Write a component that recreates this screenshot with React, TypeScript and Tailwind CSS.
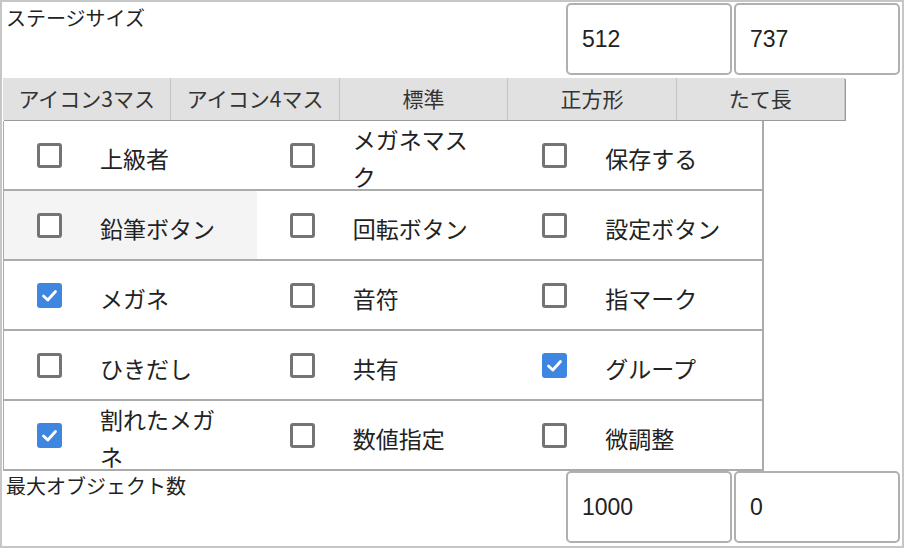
const font = { fontFamily: '"Noto Sans CJK JP", "Noto Sans", sans-serif' };

const presets = ['アイコン3マス', 'アイコン4マス', '標準', '正方形', 'たて長'];

const options: [string, boolean][][] = [
  [['上級者', false], ['メガネマスク', false], ['保存する', false]],
  [['鉛筆ボタン', false], ['回転ボタン', false], ['設定ボタン', false]],
  [['メガネ', true], ['音符', false], ['指マーク', false]],
  [['ひきだし', false], ['共有', false], ['グループ', true]],
  [['割れたメガネ', true], ['数値指定', false], ['微調整', false]],
];

function Box({ checked }: { checked: boolean }) {
  if (checked) {
    return (
      <div className="w-[25px] h-[25px] shrink-0 rounded-[3px] bg-[#3f86e0] flex items-center justify-center">
        <svg width="19" height="19" viewBox="0 0 19 19">
          <path d="M3.5 10 L7.8 14 L15.5 5.5" fill="none" stroke="white" strokeWidth="2.8" strokeLinecap="round" strokeLinejoin="round" />
        </svg>
      </div>
    );
  }
  return <div className="w-[25px] h-[25px] shrink-0 rounded-[3px] border-[3px] border-[#747474] bg-white" />;
}

function NumberField({ value }: { value: string }) {
  return (
    <div
      className="w-[166px] h-[72px] rounded-[5px] border-2 border-[#b0b0b0] bg-white flex items-center pl-[14px] text-[23px] text-[#222]"
      style={{ fontFamily: '"Liberation Sans", "Noto Sans CJK JP", sans-serif' }}
    >
      {value}
    </div>
  );
}

function SizeRow({ label, a, b }: { label: string; a: string; b: string }) {
  return (
    <div className="flex justify-between h-[73px]">
      <div className="pl-[3px] pt-px text-[20px] leading-[28px] text-[#222]">{label}</div>
      <div className="flex gap-[2px] mr-[1px]">
        <NumberField value={a} />
        <NumberField value={b} />
      </div>
    </div>
  );
}

export default function App() {
  return (
    <div className="w-[904px] h-[548px] bg-white border-2 border-[#c6c6c6] p-px overflow-hidden" style={font}>
      <SizeRow label="ステージサイズ" a="512" b="737" />
      <div className="flex w-[842px] h-[42px] mt-[2px] shadow-[1px_1px_0_#9a9a9a]">
        {presets.map(p => (
          <div
            key={p}
            className="flex-1 bg-[#e1e1e1] border-r border-[#c4c4c4] flex items-center justify-center text-[21px] text-[#333] whitespace-nowrap"
          >
            {p}
          </div>
        ))}
      </div>
      <div className="w-[761px] border-l border-r-2 border-[#ababab] mt-px">
        {options.map((row, i) => (
          <div key={i} className="flex h-[70px] border-b-2 border-[#ababab]">
            {row.map(([label, checked], j) => (
              <div
                key={label}
                className={`flex-1 flex items-center pl-[33px] ${i === 1 && j === 0 ? 'bg-[#f4f4f4]' : ''}`}
              >
                <Box checked={checked} />
                <div className="ml-[38px] w-[126px] pt-[6px] text-[23px] leading-[37px] text-[#222]">{label}</div>
              </div>
            ))}
          </div>
        ))}
      </div>
      <SizeRow label="最大オブジェクト数" a="1000" b="0" />
    </div>
  );
}
